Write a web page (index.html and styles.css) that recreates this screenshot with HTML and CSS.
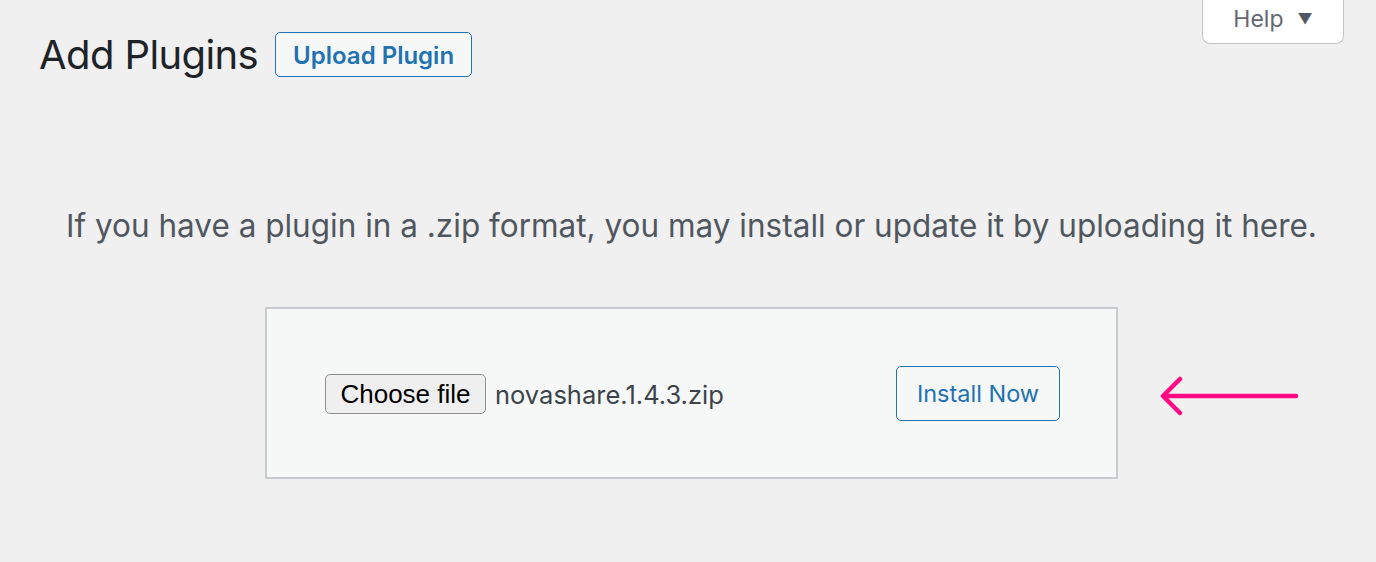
FILE: index.html
```html
<!DOCTYPE html>
<html lang="en">
<head>
<meta charset="utf-8">
<title>Add Plugins</title>
<link rel="stylesheet" href="styles.css">
</head>
<body>
<div class="wrap">
  <header class="topbar">
    <div class="title-row">
      <h1 class="page-title">Add Plugins</h1>
      <a class="btn btn-upload" href="#">Upload Plugin</a>
    </div>
    <button class="help-tab" type="button">Help <span class="caret">&#9660;</span></button>
  </header>

  <section class="upload">
    <p class="install-help">If you have a plugin in a .zip format, you may install or update it by uploading it here.</p>
    <div class="form-holder">
      <form class="upload-form">
        <div class="file-field">
          <button class="choose" type="button">Choose file</button>
          <span class="filename">novashare.1.4.3.zip</span>
        </div>
        <button class="btn btn-install" type="button">Install Now</button>
      </form>
      <svg class="arrow" width="140" height="42" viewBox="0 0 140 42" aria-hidden="true">
        <path d="M136 21 H4 M20 4 L3 21 L20 38" fill="none" stroke="#ff0a84" stroke-width="4.5" stroke-linecap="round" stroke-linejoin="round"/>
      </svg>
    </div>
  </section>
</div>
</body>
</html>
```
FILE: styles.css
```css
html, body {
  margin: 0;
  padding: 0;
}
body {
  background: #f0f0f1;
  font-family: Inter, "Noto Sans", sans-serif;
  color: #1d2327;
  height: 562px;
  overflow: hidden;
}
.wrap {
  padding: 0 32px 0 39px;
}
.topbar {
  display: flex;
  justify-content: space-between;
  align-items: flex-start;
}
.title-row {
  display: flex;
  align-items: center;
  gap: 17px;
  padding-top: 32px;
}
.page-title {
  margin: 0;
  font-size: 40px;
  font-weight: 400;
  line-height: 45px;
  letter-spacing: -0.6px;
  color: #1d2327;
}
.btn {
  box-sizing: border-box;
  display: inline-flex;
  align-items: center;
  justify-content: center;
  border: 1.5px solid #2271b1;
  border-radius: 5px;
  background: #f6f7f7;
  color: #2271b1;
  font-family: Inter, "Noto Sans", sans-serif;
  text-decoration: none;
  cursor: pointer;
}
.btn-upload {
  width: 197px;
  height: 45px;
  font-size: 24px;
  font-weight: 600;
  padding-top: 1px;
}
.help-tab {
  box-sizing: border-box;
  width: 142px;
  height: 44px;
  margin-top: 0;
  background: #fff;
  border: 1.5px solid #c3c4c7;
  border-top: none;
  border-radius: 0 0 8px 8px;
  color: #646970;
  font-family: Inter, "Noto Sans", sans-serif;
  font-size: 23px;
  padding: 0 0 6px;
  display: flex;
  align-items: center;
  justify-content: center;
  gap: 14px;
}
.caret {
  font-size: 15px;
  color: #50575e;
}
.upload {
  display: flex;
  flex-direction: column;
  align-items: center;
}
.install-help {
  margin: 129px 0 0;
  font-size: 31.5px;
  line-height: 40px;
  color: #50575e;
  text-align: center;
  white-space: nowrap;
}
.form-holder {
  position: relative;
  margin-top: 61px;
}
.upload-form {
  box-sizing: border-box;
  width: 853px;
  height: 172px;
  margin: 0;
  padding: 0 56px 0 58px;
  background: #f6f7f7;
  border: 2px solid #c9cacd;
  display: flex;
  justify-content: space-between;
  align-items: center;
}
.file-field {
  display: flex;
  align-items: center;
  gap: 9px;
  margin-top: 2px;
}
.choose {
  box-sizing: border-box;
  width: 161px;
  height: 40px;
  padding: 0;
  background: #efefef;
  border: 1.5px solid #8f8f8f;
  border-radius: 5px;
  color: #000;
  font-family: "Liberation Sans", Arial, sans-serif;
  font-size: 26px;
}
.filename {
  font-size: 25.5px;
  color: #3c434a;
}
.btn-install {
  width: 164px;
  height: 55px;
  font-size: 23.5px;
  font-weight: 400;
}
.arrow {
  position: absolute;
  left: calc(100% + 42px);
  top: 68px;
}
```
